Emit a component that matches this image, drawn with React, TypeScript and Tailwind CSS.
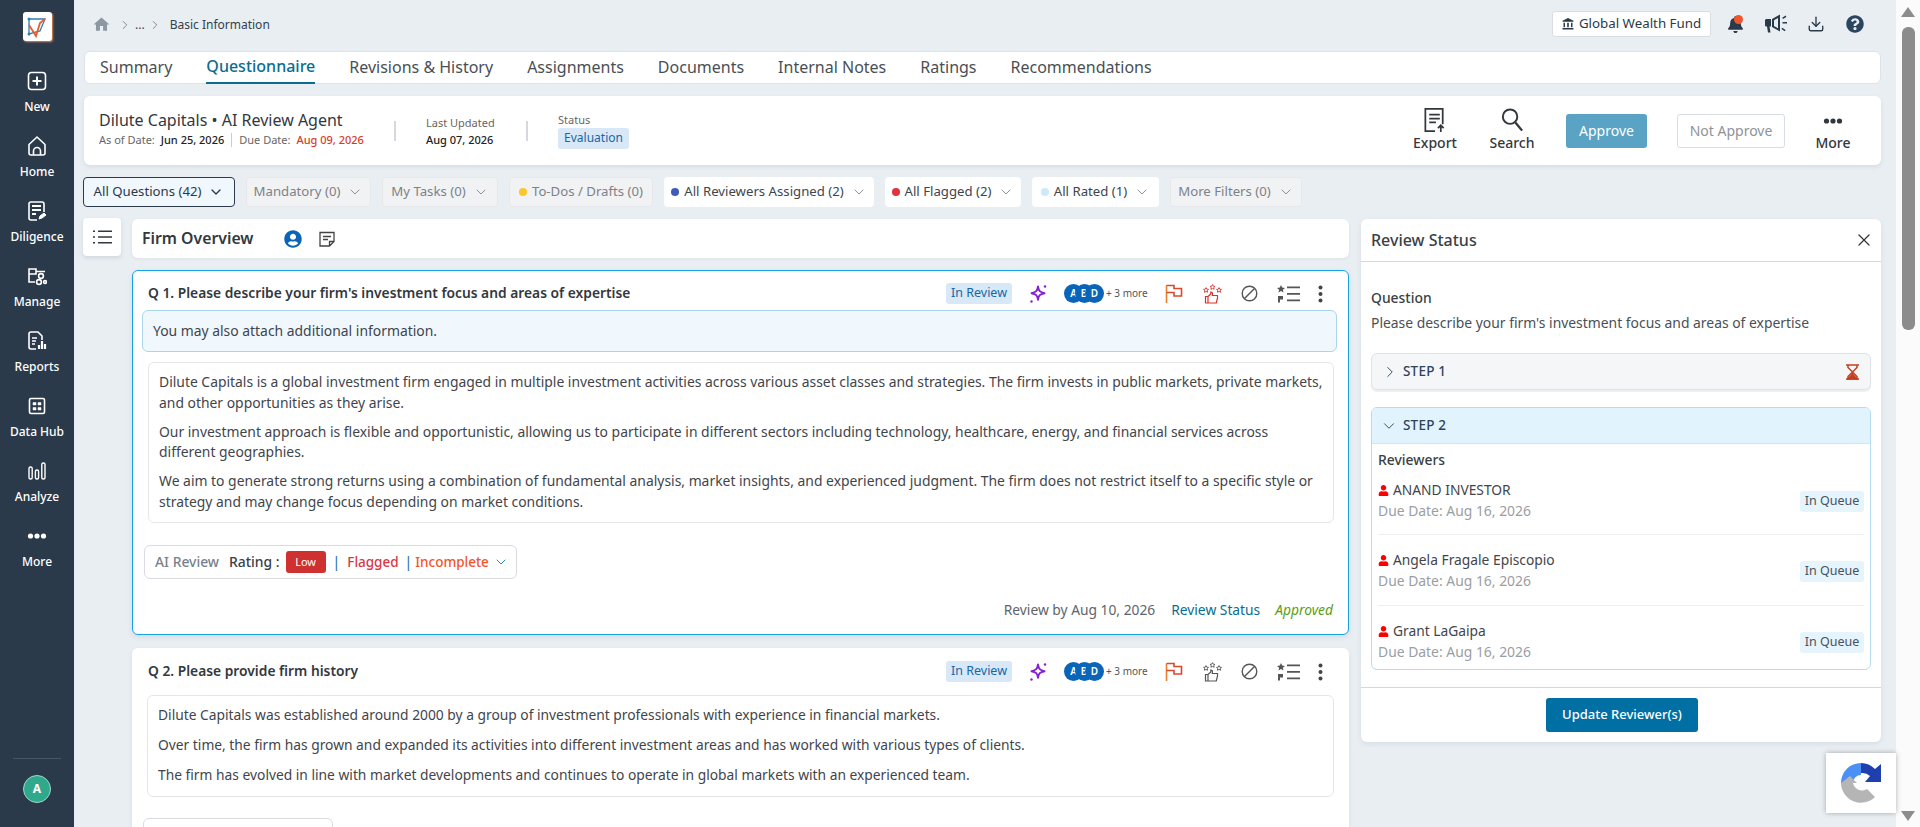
import { ChevronDown, ChevronRight, Download, X } from "lucide-react";
import { FaBell, FaQuestionCircle, FaUser, FaUserCircle } from "react-icons/fa";
import { MdHome } from "react-icons/md";
import type { ReactNode } from "react";

const font = { fontFamily: '"Noto Sans", sans-serif' };

const IconNew = () => (
  <svg width="20" height="20" viewBox="0 0 20 20" fill="none" stroke="#fff" strokeWidth="1.6">
    <rect x="1.5" y="1.5" width="17" height="17" rx="3" />
    <path d="M10 5.5v9M5.5 10h9" strokeWidth="2" />
  </svg>
);
const IconHome = () => (
  <svg width="20" height="22" viewBox="0 0 20 22" fill="none" stroke="#fff" strokeWidth="1.6">
    <path d="M2 9.5 10 2l8 7.5V18a2 2 0 0 1-2 2H4a2 2 0 0 1-2-2z" strokeLinejoin="round" />
    <path d="M6.5 20v-4a3.5 3.5 0 0 1 7 0v4" />
  </svg>
);
const IconDiligence = () => (
  <svg width="20" height="22" viewBox="0 0 20 22" fill="none" stroke="#fff" strokeWidth="1.6">
    <path d="M10 20H4a2 2 0 0 1-2-2V4a2 2 0 0 1 2-2h11a2 2 0 0 1 2 2v8" />
    <path d="M5 6h9M5 10h9M5 14h4" strokeWidth="2" />
    <path d="m12 19 1-3 4-3 2 2-4 3z" fill="#fff" strokeWidth="1" />
  </svg>
);
const IconManage = () => (
  <svg width="20" height="20" viewBox="0 0 20 20" fill="none" stroke="#fff" strokeWidth="1.6">
    <path d="M2 3h7v5H2zM2 8v8h6M9 5.5h9" />
    <circle cx="14" cy="10" r="2.4" />
    <circle cx="12" cy="16" r="2.4" />
    <circle cx="18" cy="16" r="1.4" />
  </svg>
);
const IconReports = () => (
  <svg width="20" height="20" viewBox="0 0 20 20" fill="none" stroke="#fff" strokeWidth="1.6">
    <path d="M9 18H4a2 2 0 0 1-2-2V3a2 2 0 0 1 2-2h7l4 4v4" />
    <path d="M5 7h5M5 10h4M5 13h3" />
    <path d="M12 18v-4M15 18V10M18 18v-5" strokeWidth="2.2" />
  </svg>
);
const IconData = () => (
  <svg width="18" height="18" viewBox="0 0 18 18" fill="none" stroke="#fff" strokeWidth="1.6">
    <rect x="1.5" y="1.5" width="15" height="15" rx="1.5" />
    <path d="M5 5.5h3v2.5H5zM10 5.5h3v2.5h-3zM5 10.5h3V13H5zM10 10.5h3V13h-3z" fill="#fff" strokeWidth="0.5" />
  </svg>
);
const IconAnalyze = () => (
  <svg width="20" height="20" viewBox="0 0 20 20" fill="none" stroke="#fff" strokeWidth="1.4">
    <rect x="2" y="6" width="3.2" height="12" rx="1.5" />
    <rect x="8.4" y="9" width="3.2" height="9" rx="1.5" />
    <rect x="14.8" y="2" width="3.2" height="16" rx="1.5" />
  </svg>
);
const Dots = ({ color = "#fff" }: { color?: string }) => (
  <svg width="20" height="6" viewBox="0 0 20 6" fill={color}>
    <circle cx="3.5" cy="3" r="2.6" />
    <circle cx="10" cy="3" r="2.6" />
    <circle cx="16.5" cy="3" r="2.6" />
  </svg>
);

const navItems: { label: string; icon: ReactNode }[] = [
  { label: "New", icon: <IconNew /> },
  { label: "Home", icon: <IconHome /> },
  { label: "Diligence", icon: <IconDiligence /> },
  { label: "Manage", icon: <IconManage /> },
  { label: "Reports", icon: <IconReports /> },
  { label: "Data Hub", icon: <IconData /> },
  { label: "Analyze", icon: <IconAnalyze /> },
  { label: "More", icon: <Dots /> },
];

const tabs = ["Summary", "Questionnaire", "Revisions & History", "Assignments", "Documents", "Internal Notes", "Ratings", "Recommendations"];

const filters: { label: string; w: string; dot?: string; active?: boolean; muted?: boolean; noChevron?: boolean }[] = [
  { label: "All Questions (42)", w: "w-[152px]", active: true },
  { label: "Mandatory (0)", w: "w-[125px]", muted: true },
  { label: "My Tasks (0)", w: "w-[116px]", muted: true },
  { label: "To-Dos / Drafts (0)", w: "w-[144px]", dot: "bg-[#fcc62d]", muted: true, noChevron: true },
  { label: "All Reviewers Assigned (2)", w: "w-[210px]", dot: "bg-[#4159b8]" },
  { label: "All Flagged (2)", w: "w-[136px]", dot: "bg-[#e0323f]" },
  { label: "All Rated (1)", w: "w-[127px]", dot: "bg-[#cdeafd]" },
  { label: "More Filters (0)", w: "w-[132px]", muted: true },
];

const reviewers = ["ANAND INVESTOR", "Angela Fragale Episcopio", "Grant LaGaipa"];

const Logo = () => (
  <div className="w-[29px] h-[29px] rounded-[3px] bg-white shadow-[1px_1px_2px_#e8864f] flex items-center justify-center">
    <svg width="24" height="24" viewBox="0 0 24 24" fill="none">
      <path d="M4 4v15l11-3 5-12z" stroke="#2d7fb0" strokeWidth="1.3" />
      <path d="M4 10l7 11 4-13 5-4" stroke="#ea5b2c" strokeWidth="1.8" />
      <circle cx="4" cy="4" r="1.500" fill="#2d7fb0" />
      <circle cx="4" cy="19" r="1.500" fill="#2d7fb0" />
    </svg>
  </div>
);

const FlagIcon = () => (
  <svg width="18" height="20" viewBox="0 0 18 20" fill="none" strokeWidth="1.6">
    <path d="M1.500 19V1.500" stroke="#e8812f" />
    <path d="M1.500 1.500h7.500v3h7.500v7.500H9v-3.500H1.500" stroke="#d9492c" />
  </svg>
);
const Sparkle = () => (
  <svg width="22" height="22" viewBox="0 0 22 22" fill="none" stroke="#8320d8" strokeWidth="1.9">
    <path d="M10 3.500c.7 4.500 1.800 5.800 6.500 6.700-4.700.9-5.800 2.200-6.500 6.700-.7-4.500-1.800-5.800-6.500-6.700C8.200 9.300 9.300 8 10 3.500z" strokeLinejoin="round" />
    <circle cx="17" cy="3.500" r="1.200" fill="#8320d8" stroke="none" />
    <circle cx="3.500" cy="18.500" r="1.200" fill="#8320d8" stroke="none" />
  </svg>
);
const MiniStar = ({ x, y, color }: { x: number; y: number; color: string }) => (
  <path
    d={`M${x} ${y - 2.4}l.8 1.600 1.700.2-1.300 1.200.4 1.700-1.600-.9-1.600.9.4-1.700-1.300-1.200 1.700-.2z`}
    stroke={color}
    strokeWidth="0.9"
    fill="none"
  />
);
const Thumbs = ({ color }: { color: string }) => (
  <svg width="19" height="20" viewBox="0 0 19 20" fill="none" stroke={color} strokeWidth="1.200">
    <MiniStar x={3} y={6} color={color} />
    <MiniStar x={9.500} y={3} color={color} />
    <MiniStar x={16} y={6} color={color} />
    <path d="M5 19H2.500v-6.500H5zM5 12.500l2.800-2.500V8c1.500 0 2 1 1.500 3.500H14.500v2.500l-1.200 5H5" />
  </svg>
);
const Ban = () => (
  <svg width="17" height="17" viewBox="0 0 17 17" fill="none" stroke="#555" strokeWidth="1.4">
    <circle cx="8.500" cy="8.500" r="7.300" />
    <path d="M3.500 13.500 13.500 3.500" />
  </svg>
);
const StarList = () => (
  <svg width="23" height="18" viewBox="0 0 23 18" fill="#555">
    <path d="M4 0l1.200 2.600 2.800.3-2.100 1.900.6 2.700L4 6.100 1.500 7.500l.6-2.700L0 2.900l2.800-.3z" />
    <path d="M1 11h5v3.500H3v3H1z" />
    <path d="M10 1.500h13v1.800H10zM10 8h13v1.800H10zM10 14.500h13v1.800H10z" />
  </svg>
);
const Kebab = () => (
  <svg width="5" height="18" viewBox="0 0 5 18" fill="#444">
    <circle cx="2.500" cy="2.500" r="2" />
    <circle cx="2.500" cy="9" r="2" />
    <circle cx="2.500" cy="15.500" r="2" />
  </svg>
);
const Hourglass = () => (
  <svg width="15" height="16" viewBox="0 0 15 16" fill="none" stroke="#c2401f" strokeWidth="1.5">
    <path d="M1 1h13M1 15h13M3 1v2.500L7.500 8 3 12.500V15M12 1v2.500L7.500 8l4.500 4.500V15" />
    <path d="M3 15l4.500-5 4.500 5z" fill="#c2401f" />
  </svg>
);
const Megaphone = () => (
  <svg width="24" height="20" viewBox="0 0 24 20" fill="#2b3a4a">
    <path d="M0 6.500C0 5.500.8 5 1.500 5H6v7.500H4.500l1 6H3l-1-6h-.5C.7 12.500 0 12 0 11z" />
    <path d="M7 5l8-4.500v17L7 13zM9 6.200v5.700l4 2.300V3.900z" fillRule="evenodd" />
    <path d="M17.500 8h4.500v1.600h-4.500zM17.200 3.800 20.600 1.600l.8 1.300-3.400 2.200zM17.200 13.800l3.400 2.200-.8 1.300-3.400-2.200z" />
  </svg>
);

const Avatar = ({ letter, className }: { letter: string; className?: string }) => (
  <div className={`w-[19px] h-[19px] rounded-full bg-[#0a64b8] text-white text-[10px] font-semibold flex items-center justify-center ${className ?? ""}`}>
    {letter}
  </div>
);

const QuestionHeader = ({ title, thumbColor }: { title: string; thumbColor: string }) => (
  <div className="flex items-center h-[21px]">
    <div className="flex-1 text-[13.800px] font-semibold text-[#33383d]">{title}</div>
    <div className="h-[21px] w-[66px] rounded-[3px] bg-[#d9e8f6] text-[12.500px] text-[#1667a5] flex items-center justify-center">In Review</div>
    <div className="w-[22px] ml-[16px] flex justify-center"><Sparkle /></div>
    <div className="flex w-[40px] ml-[14px]">
      <Avatar letter="A" />
      <Avatar letter="B" className="-ml-[8.500px]" />
      <Avatar letter="D" className="-ml-[8.500px]" />
    </div>
    <div className="ml-[2px] w-[42px] text-[10px] text-[#555] whitespace-nowrap">+ 3 more</div>
    <div className="ml-[17px] w-[18px]"><FlagIcon /></div>
    <div className="ml-[20px] w-[19px]"><Thumbs color={thumbColor} /></div>
    <div className="ml-[19px] w-[17px]"><Ban /></div>
    <div className="ml-[19px] w-[23px]"><StarList /></div>
    <div className="ml-[18px] mr-[16px] w-[5px]"><Kebab /></div>
  </div>
);

export default function App() {
  return (
    <div style={font} className="h-[827px] w-[1920px] overflow-hidden flex bg-[#e9eef3] text-[#33383d]">
      {/* sidebar */}
      <aside className="w-[74px] shrink-0 bg-[#2b3a4a] flex flex-col items-center text-white">
        <div className="mt-[12px] mb-[28px]"><Logo /></div>
        <nav className="flex flex-col">
          {navItems.map((item) => (
            <div key={item.label} className="h-[65px] flex flex-col items-center">
              <div className="h-[24px] flex items-center justify-center">{item.icon}</div>
              <div className="mt-[6px] text-[12px] leading-[16px] font-medium whitespace-nowrap">{item.label}</div>
            </div>
          ))}
        </nav>
        <div className="mt-auto w-[48px] border-t border-[#46566a] pt-[16px] pb-[24px] flex justify-center">
          <div className="w-[28px] h-[28px] rounded-full bg-[#2fa88c] border border-[#9fd8c9] text-[12px] font-bold flex items-center justify-center">A</div>
        </div>
      </aside>

      {/* main */}
      <main className="flex-1 min-w-0 pl-[10px] pr-[15px] relative">
        <header className="h-[51px] flex items-center">
          <MdHome className="text-[#8c97a3] ml-[8px] mb-[2px] text-[19px]" />
          <ChevronRight size={14} strokeWidth={1.300} className="ml-[7px] mb-[2px] text-[#667]" />
          <span className="ml-[3px] mb-[2px] text-[12px] text-[#445]">...</span>
          <ChevronRight size={14} strokeWidth={1.300} className="ml-[3px] mb-[2px] text-[#667]" />
          <span className="ml-[8px] mb-[2px] text-[12px] text-[#33414f]">Basic Information</span>
          <div className="ml-auto h-[26px] w-[159px] mb-[3px] rounded-[3px] bg-white border border-[#d8dde3] flex items-center justify-center gap-[5px] text-[13.300px] text-[#2b3a4a]">
            <svg width="12" height="12" viewBox="0 0 12 12" fill="#2b3a4a">
              <path d="M6 0 .5 2.800v1h11v-1zM1.500 4.800h1.500v4.500H1.500zM5.200 4.800h1.600v4.500H5.200zM9 4.800h1.500v4.500H9zM.5 10h11v1.500H.5z" />
            </svg>
            Global Wealth Fund
          </div>
          <div className="ml-[16px] relative w-[16px] mb-[3px]">
            <FaBell className="text-[#2b3a4a] text-[17px]" />
            <span className="absolute -top-[1px] left-[7px] w-[9px] h-[9px] rounded-full bg-[#f0562d]" />
          </div>
          <div className="ml-[22px] mb-[3px]"><Megaphone /></div>
          <Download size={18} strokeWidth={1.800} className="ml-[18px] mb-[3px] text-[#2b3a4a]" />
          <FaQuestionCircle className="ml-[21px] mb-[3px] mr-[17px] text-[#2b4560] text-[18px]" />
        </header>

        {/* tabs */}
        <div className="h-[33px] rounded-[6px] bg-white border border-[#dfe3e8] flex gap-[34px] pl-[15px]">
          {tabs.map((t) => (
            <div
              key={t}
              className={`h-[32px] pb-[2px] flex items-center text-[16px] whitespace-nowrap ${
                t === "Questionnaire" ? "text-[#0a6d8f] font-medium border-b-2 border-[#0a6d8f]" : "text-[#4a4f55]"
              }`}
            >
              {t}
            </div>
          ))}
        </div>

        {/* info card */}
        <div className="mt-[12px] h-[69px] rounded-[6px] bg-white shadow-[0_2px_4px_rgba(60,80,100,0.1)] flex items-center pl-[15px] pr-[18px]">
          <div className="w-[295px] mb-[4px]">
            <div className="text-[16px] leading-[22px] text-[#33383d]">Dilute Capitals • AI Review Agent</div>
            <div className="flex items-center text-[11px] leading-[16px] mt-[1px]">
              <span className="text-[#666]">As of Date:</span>
              <span className="ml-[6px] font-medium text-[#222]">Jun 25, 2026</span>
              <span className="mx-[7px] h-[14px] border-l border-[#c9ced3]" />
              <span className="text-[#666]">Due Date:</span>
              <span className="ml-[6px] font-medium text-[#d83c1f]">Aug 09, 2026</span>
            </div>
          </div>
          <div className="h-[20px] border-l-2 border-[#d5d8dc]" />
          <div className="ml-[30px] mt-[2px] w-[100px] text-[11px]">
            <div className="text-[#666] leading-[16px]">Last Updated</div>
            <div className="font-medium text-[#222] leading-[16px] mt-[1px]">Aug 07, 2026</div>
          </div>
          <div className="h-[20px] border-l-2 border-[#d5d8dc]" />
          <div className="ml-[30px] text-[11px]">
            <div className="text-[#666] leading-[14px]">Status</div>
            <div className="mt-[1px] h-[21px] w-[71px] rounded-[3px] bg-[#d9e8f6] text-[#1667a5] text-[12px] flex items-center justify-center">Evaluation</div>
          </div>

          <div className="ml-auto flex items-center">
            <div className="w-[60px] mb-[2px] flex flex-col items-center">
              <svg width="24" height="27" viewBox="0 0 24 28" fill="none" stroke="#33383d" strokeWidth="1.800">
                <path d="M12 25H2V2h18v16" />
                <path d="M6 8h11M6 12h11M6 16h7" />
                <path d="M18 26v-7M15 22l3-3 3 3" />
              </svg>
              <div className="text-[14px] leading-[18px] font-medium">Export</div>
            </div>
            <div className="ml-[17px] w-[60px] mb-[2px] flex flex-col items-center">
              <svg width="26" height="27" viewBox="0 0 26 28" fill="none" stroke="#33383d" strokeWidth="2">
                <circle cx="11" cy="10" r="7.500" />
                <path d="m16.500 16 7 8.500" strokeWidth="2.400" />
              </svg>
              <div className="text-[14px] leading-[18px] font-medium">Search</div>
            </div>
            <div className="ml-[24px] h-[34px] w-[81px] rounded-[3px] bg-[#5aa3c4] text-white text-[14px] flex items-center justify-center">Approve</div>
            <div className="ml-[30px] h-[34px] w-[108px] rounded-[3px] border border-[#d8dde3] text-[#8e9399] text-[14px] flex items-center justify-center">Not Approve</div>
            <div className="ml-[18px] w-[60px] mb-[2px] flex flex-col items-center">
              <div className="h-[27px] flex items-center"><Dots color="#33383d" /></div>
              <div className="text-[14px] leading-[18px] font-medium">More</div>
            </div>
          </div>
        </div>

        {/* filters */}
        <div className="mt-[12px] -ml-[1px] h-[30px] flex gap-[11px]">
          {filters.map((f) => (
            <div
              key={f.label}
              className={`${f.w} shrink-0 rounded-[4px] flex items-center justify-center text-[13.200px] whitespace-nowrap ${
                f.active
                  ? "bg-[#f0f7fd] border border-[#2b3a4a] text-[#2b3a4a]"
                  : f.muted
                    ? "bg-[#f1f2f4] border border-[#e6e8eb] text-[#7d8287]"
                    : "bg-white text-[#3f454b]"
              }`}
            >
              {f.dot && <span className={`w-[8px] h-[8px] rounded-full mr-[5px] ${f.dot}`} />}
              {f.label}
              {!f.noChevron && (
                <ChevronDown size={16} strokeWidth={f.active ? 2 : 1.300} className={`ml-[7px] ${f.active ? "text-[#2b3a4a]" : "text-[#7d8287]"}`} />
              )}
            </div>
          ))}
        </div>

        {/* body */}
        <div className="mt-[12px] -ml-[1px] flex">
          <div className="-mt-[1px] w-[38px] h-[38px] rounded-[4px] bg-white shadow-[0_2px_4px_rgba(60,80,100,0.15)] flex items-center justify-center shrink-0">
            <svg width="19" height="14" viewBox="0 0 19 14" fill="#33383d">
              <path d="M0 .5h2v1.600H0zM5 .5h14v1.600H5zM0 6.200h2v1.600H0zM5 6.200h14v1.600H5zM0 11.900h2v1.600H0zM5 11.900h14v1.600H5z" />
            </svg>
          </div>

          {/* questions */}
          <div className="ml-[11px] w-[1217px] shrink-0 flex flex-col">
            <div className="h-[39px] rounded-[6px] bg-white shadow-[0_1px_3px_rgba(60,80,100,0.08)] flex items-center pl-[10px]">
              <span className="text-[15.800px] font-semibold text-[#33383d]">Firm Overview</span>
              <FaUserCircle className="ml-[31px] text-[18px] text-[#0a64b8]" />
              <svg width="16" height="16" viewBox="0 0 16 16" fill="none" stroke="#444" strokeWidth="1.300" className="ml-[17px]">
                <path d="M1 1.500h14v9l-4.500 4.500H1zM10.500 15v-4.500H15M4 5.500h8M4 8.500h5" />
              </svg>
            </div>

            <section className="mt-[12px] h-[365px] rounded-[6px] bg-white border border-[#15a3e0] px-[9px] shadow-[0_2px_5px_rgba(60,80,100,0.12)] flex flex-col">
              <div className="pt-[12px] pl-[6px]">
                <QuestionHeader title="Q 1. Please describe your firm's investment focus and areas of expertise" thumbColor="#d9322f" />
              </div>
              <div className="mt-[6px] mr-[2px] h-[42px] rounded-[6px] bg-[#f0f8fe] border border-[#a9d6ea] flex items-center pl-[10px] text-[13.900px] text-[#3f454b]">
                You may also attach additional information.
              </div>
              <div className="mt-[10px] ml-[6px] mr-[5px] h-[161px] rounded-[6px] border border-[#e4e7ea] px-[10px] pt-[9px] text-[13.900px] leading-[20.500px] text-[#3f454b] flex flex-col gap-[8.500px]">
                <p>Dilute Capitals is a global investment firm engaged in multiple investment activities across various asset classes and strategies. The firm invests in public markets, private markets, and other opportunities as they arise.</p>
                <p>Our investment approach is flexible and opportunistic, allowing us to participate in different sectors including technology, healthcare, energy, and financial services across different geographies.</p>
                <p>We aim to generate strong returns using a combination of fundamental analysis, market insights, and experienced judgment. The firm does not restrict itself to a specific style or strategy and may change focus depending on market conditions.</p>
              </div>
              <div className="mt-[22px] ml-[2px] h-[34px] w-[373px] shrink-0 rounded-[6px] border border-[#d8dbe3] flex items-center pl-[10px] text-[13.900px]">
                <span className="font-medium text-[#79828c]">AI Review</span>
                <span className="ml-[10px] font-medium text-[#3a4047]">Rating :</span>
                <span className="ml-[6px] h-[22px] w-[40px] rounded-[3px] bg-[#cf3131] text-white text-[11px] flex items-center justify-center">Low</span>
                <span className="ml-[7px] text-[#1667a5]">|</span>
                <span className="ml-[7px] text-[13.500px] font-medium text-[#d8383f]">Flagged</span>
                <span className="ml-[6px] text-[#1667a5]">|</span>
                <span className="ml-[3px] text-[13.500px] font-medium text-[#f0562d]">Incomplete</span>
                <ChevronDown size={16} strokeWidth={1.500} className="ml-[4px] text-[#2b86c5]" />
              </div>
              <div className="mt-[21px] mr-[6px] flex justify-end items-center text-[13.800px]">
                <span className="text-[#5e646b]">Review by Aug 10, 2026</span>
                <span className="ml-[16px] text-[#0a6d8f]">Review Status</span>
                <span className="ml-[15px] italic text-[#5a9e10]">Approved</span>
              </div>
            </section>

            <section className="mt-[13px] h-[300px] rounded-[6px] bg-white px-[10px] shadow-[0_2px_5px_rgba(60,80,100,0.08)] flex flex-col">
              <div className="pt-[13px] pl-[6px]">
                <QuestionHeader title="Q 2. Please provide firm history" thumbColor="#555" />
              </div>
              <div className="mt-[13px] mx-[5px] h-[102px] shrink-0 rounded-[6px] border border-[#e4e7ea] px-[10px] pt-[9px] text-[13.800px] leading-[20.500px] text-[#3f454b] flex flex-col gap-[9.500px]">
                <p>Dilute Capitals was established around 2000 by a group of investment professionals with experience in financial markets.</p>
                <p>Over time, the firm has grown and expanded its activities into different investment areas and has worked with various types of clients.</p>
                <p>The firm has evolved in line with market developments and continues to operate in global markets with an experienced team.</p>
              </div>
              <div className="mt-[21px] ml-[1px] h-[34px] w-[190px] shrink-0 rounded-[6px] border border-[#d8dbe3]" />
            </section>
          </div>

          {/* review panel */}
          <aside className="ml-[12px] w-[520px] shrink-0 h-[523px] rounded-[6px] bg-white shadow-[0_2px_5px_rgba(60,80,100,0.1)] flex flex-col">
            <div className="h-[43px] shrink-0 border-b border-[#d5d8dc] flex items-center justify-between pl-[10px] pr-[7px]">
              <span className="text-[16px] font-medium text-[#3a3f44]">Review Status</span>
              <X size={20} strokeWidth={1.500} className="text-[#33383d]" />
            </div>
            <div className="px-[10px]">
              <div className="mt-[26px] text-[13.900px] leading-[20px] font-medium text-[#3a3f44]">Question</div>
              <div className="mt-[5px] text-[13.900px] leading-[20px] text-[#4a4f55]">Please describe your firm's investment focus and areas of expertise</div>
              <div className="mt-[20px] h-[37px] rounded-[6px] bg-[#f5f6f8] border border-[#dfe3e8] shadow-[0_2px_0_#eef0f2] flex items-center pl-[9px] pr-[10px]">
                <ChevronRight size={18} strokeWidth={1.300} className="text-[#3a4a5a]" />
                <span className="ml-[4px] text-[13.500px] font-medium text-[#2f4358] tracking-[0.2px]">STEP 1</span>
                <span className="ml-auto"><Hourglass /></span>
              </div>
              <div className="mt-[17px] h-[263px] rounded-[6px] border border-[#b8dcef] overflow-hidden flex flex-col">
                <div className="h-[36px] shrink-0 bg-[#e1f3fd] border-b border-[#cfe6f2] flex items-center pl-[8px]">
                  <ChevronDown size={18} strokeWidth={1.300} className="text-[#3a4a5a]" />
                  <span className="ml-[5px] text-[13.500px] font-medium text-[#2f4358] tracking-[0.2px]">STEP 2</span>
                </div>
                <div className="px-[6px]">
                  <div className="mt-[6px] text-[13.900px] leading-[20px] font-medium text-[#3a3f44]">Reviewers</div>
                  <div>
                    {reviewers.map((name, i) => (
                      <div
                        key={name}
                        className={`flex ${i === 0 ? "pt-[10px] h-[65px] border-b border-[#eceef0]" : i === 1 ? "pt-[15px] h-[71px] border-b border-[#eceef0]" : "pt-[15px] h-[64px]"}`}
                      >
                        <div className="w-full h-[41px] flex justify-between items-center">
                          <div>
                            <div className="flex items-center text-[13.800px] leading-[20px] text-[#3f454b]">
                              <FaUser className="text-[#f00] text-[11px] mr-[4px]" />
                              {name}
                            </div>
                            <div className="text-[13.900px] leading-[21px] text-[#9a9ea3]">Due Date: Aug 16, 2026</div>
                          </div>
                          <div className="mt-[2px] h-[21px] w-[64px] rounded-[3px] bg-[#e6f4fd] text-[12.500px] text-[#46525e] flex items-center justify-center">In Queue</div>
                        </div>
                      </div>
                    ))}
                  </div>
                </div>
              </div>
            </div>
            <div className="mt-[17px] border-t border-[#d5d8dc] flex justify-center pt-[10px] pl-[2px]">
              <div className="h-[34px] w-[152px] rounded-[3px] bg-[#006fa3] text-white text-[13px] font-medium flex items-center justify-center">Update Reviewer(s)</div>
            </div>
          </aside>
        </div>

        {/* recaptcha badge */}
        <div className="absolute left-[1752px] top-[753px] w-[70px] h-[60px] bg-white shadow-[0_0_5px_rgba(0,0,0,0.3)] flex items-center justify-center">
          <svg width="44" height="44" viewBox="0 0 44 44" fill="none">
            <path d="M22 2A20 20 0 0 0 2 22h12a8 8 0 0 1 8-8z" fill="#4a90f5" />
            <path d="M22 2a20 20 0 0 1 14 6l6-5v18H26l5-6a11 11 0 0 0-9-3z" fill="#1f3fae" />
            <path d="M2 22a20 20 0 0 0 34 14l-8-8a9 9 0 0 1-14-6h4l-7-7-9 7z" fill="#b5b5b5" />
          </svg>
        </div>
      </main>

      {/* page scrollbar */}
      <div className="w-[24px] shrink-0 bg-[#fbfbfb] flex flex-col items-center">
        <div className="mt-[7px] w-0 h-0 border-x-[7px] border-x-transparent border-b-[10px] border-b-[#8c8c8c]" />
        <div className="mt-[10px] w-[13px] h-[303px] rounded-[6px] bg-[#8c8c8c]" />
        <div className="mt-auto mb-[6px] w-0 h-0 border-x-[7px] border-x-transparent border-t-[10px] border-t-[#8c8c8c]" />
      </div>
    </div>
  );
}
